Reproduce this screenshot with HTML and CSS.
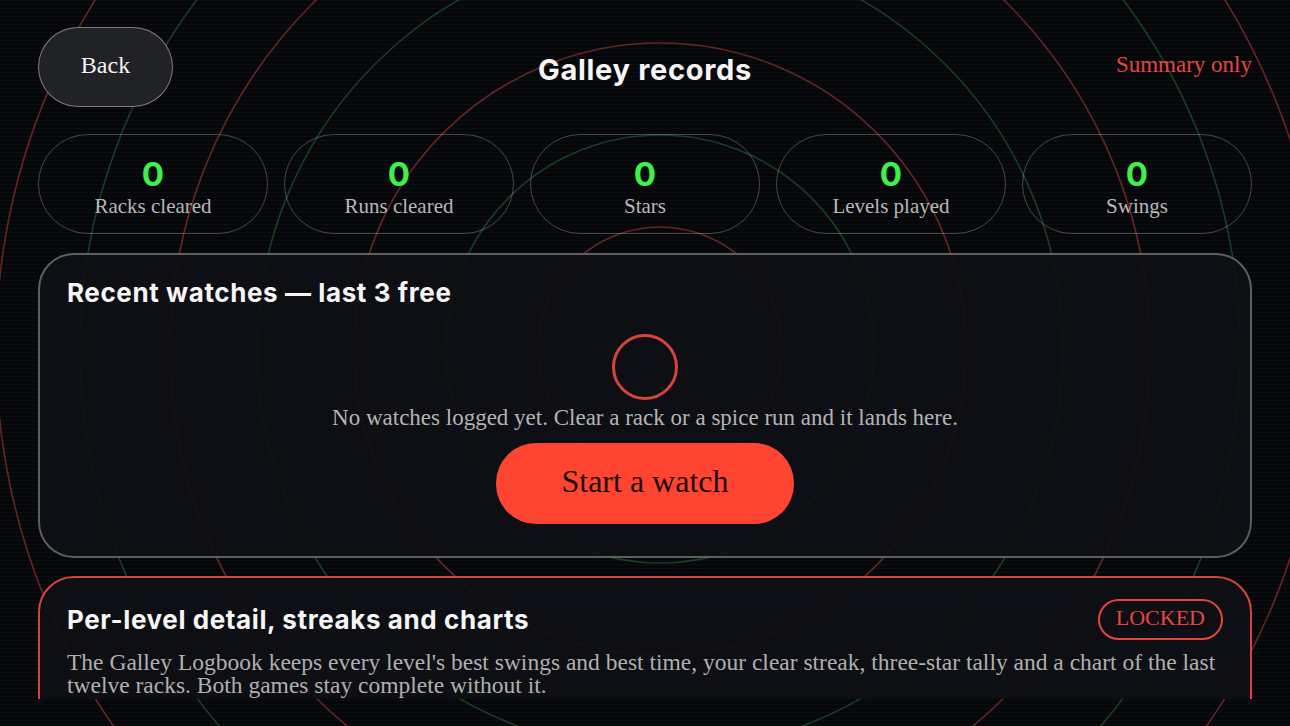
FILE: index.html
```html
<!DOCTYPE html>
<html lang="en">
<head>
<meta charset="utf-8">
<title>Galley records</title>
<link rel="stylesheet" href="styles.css">
</head>
<body>
<svg class="rings" width="1290" height="726" viewBox="0 0 1290 726" aria-hidden="true">
  <g fill="none" stroke-width="1.6">
    <circle class="r" cx="660" cy="349" r="122"/>
    <circle class="g" cx="660" cy="349" r="214"/>
    <circle class="r" cx="660" cy="349" r="306"/>
    <circle class="g" cx="660" cy="349" r="403"/>
    <circle class="r" cx="660" cy="349" r="490"/>
    <circle class="g" cx="660" cy="349" r="580"/>
    <circle class="r" cx="660" cy="349" r="664"/>
  </g>
</svg>
<div class="scan"></div>
<main class="screen">
  <header class="topbar">
    <button class="back">Back</button>
    <h1 class="title">Galley records</h1>
    <div class="summary">Summary only</div>
  </header>

  <section class="stats">
    <div class="stat"><div class="num">0</div><div class="label">Racks cleared</div></div>
    <div class="stat"><div class="num">0</div><div class="label">Runs cleared</div></div>
    <div class="stat"><div class="num">0</div><div class="label">Stars</div></div>
    <div class="stat"><div class="num">0</div><div class="label">Levels played</div></div>
    <div class="stat"><div class="num">0</div><div class="label">Swings</div></div>
  </section>

  <section class="card recent">
    <h2 class="card-title">Recent watches — last 3 free</h2>
    <div class="empty">
      <div class="empty-ring"></div>
      <p class="empty-text">No watches logged yet. Clear a rack or a spice run and it lands here.</p>
      <button class="cta">Start a watch</button>
    </div>
  </section>

  <section class="card locked">
    <div class="locked-head">
      <h2 class="card-title">Per-level detail, streaks and charts</h2>
      <span class="badge">LOCKED</span>
    </div>
    <p class="locked-text">The Galley Logbook keeps every level's best swings and best time, your clear streak, three-star tally and a chart of the last twelve racks. Both games stay complete without it.</p>
  </section>
</main>
</body>
</html>
```

FILE: styles.css
```css
* { box-sizing: border-box; }

html, body {
  margin: 0;
  padding: 0;
}

body {
  width: 1290px;
  height: 726px;
  overflow: hidden;
  background: #06070b;
  position: relative;
  font-family: "Liberation Serif", "Times New Roman", serif;
  color: #fff;
}

.rings {
  position: absolute;
  left: 0;
  top: 0;
  z-index: 0;
}
.rings .r { stroke: rgba(214, 70, 60, 0.46); }
.rings .g { stroke: rgba(60, 170, 80, 0.34); }

.scan {
  position: absolute;
  inset: 0;
  z-index: 1;
  pointer-events: none;
  background: repeating-linear-gradient(to bottom, rgba(255,255,255,0.025) 0 1px, transparent 1px 4px);
}

.screen {
  position: relative;
  z-index: 2;
  height: 699px;
  overflow: hidden;
  padding: 27px 38px 0;
}

.topbar {
  display: grid;
  grid-template-columns: 1fr auto 1fr;
  align-items: center;
  height: 80px;
}

.back {
  width: 135px;
  height: 80px;
  border-radius: 40px;
  background: #212226;
  border: 1.5px solid rgba(255,255,255,0.42);
  color: #f3f3f3;
  font-family: "Liberation Serif", serif;
  font-size: 24px;
  line-height: 24px;
  padding: 0 0 4px;
  cursor: pointer;
}

.title {
  margin: 0;
  font-family: Inter, "Liberation Sans", sans-serif;
  font-weight: 700;
  font-size: 29px;
  letter-spacing: 0.7px;
  color: #f6f6f6;
  position: relative;
  top: 2px;
}

.summary {
  justify-self: end;
  color: #e4483b;
  font-size: 23px;
  position: relative;
  top: -2px;
}

.stats {
  margin-top: 27px;
  display: grid;
  grid-template-columns: repeat(5, 1fr);
  gap: 16px;
}

.stat {
  height: 100px;
  border: 1px solid rgba(255,255,255,0.26);
  border-radius: 50px;
  display: flex;
  flex-direction: column;
  align-items: center;
  justify-content: center;
}

.num {
  font-family: Inter, "Liberation Sans", sans-serif;
  font-weight: 700;
  font-size: 33px;
  line-height: 36px;
  color: #3ef04a;
  margin-top: 6px;
}

.label {
  font-size: 21px;
  line-height: 26px;
  color: #b8b8b8;
  margin-top: 1px;
}

.card {
  background: rgba(15, 16, 21, 0.94);
  border-radius: 36px;
  padding-left: 27px;
  padding-right: 27px;
}

.recent {
  margin-top: 19px;
  height: 305px;
  border: 2px solid rgba(255,255,255,0.33);
  padding-top: 23px;
}

.card-title {
  margin: 0;
  font-family: Inter, "Liberation Sans", sans-serif;
  font-weight: 700;
  font-size: 26px;
  letter-spacing: 0.6px;
  line-height: 30px;
  color: #f6f6f6;
}

.empty {
  display: flex;
  flex-direction: column;
  align-items: center;
}

.empty-ring {
  margin-top: 26px;
  width: 66px;
  height: 66px;
  border-radius: 50%;
  border: 3px solid #d6443a;
}

.empty-text {
  margin: 5px 0 0;
  font-size: 23px;
  line-height: 26px;
  color: #b4b4b4;
}

.cta {
  margin-top: 12px;
  width: 298px;
  height: 81px;
  border-radius: 40px;
  border: none;
  background: #ff4431;
  color: #1c0b08;
  font-family: "Liberation Serif", serif;
  font-size: 32px;
  line-height: 32px;
  padding: 0 0 5px;
  cursor: pointer;
}

.locked {
  margin-top: 18px;
  height: 200px;
  border: 2px solid #d9443a;
  padding-top: 21px;
}

.locked-head {
  display: flex;
  align-items: center;
  justify-content: space-between;
  height: 41px;
}

.badge {
  height: 41px;
  padding: 0 16px;
  border: 2px solid #e2463a;
  border-radius: 21px;
  color: #e4483b;
  font-size: 22px;
  line-height: 34px;
}

.locked-text {
  margin: 11px 0 0;
  font-size: 23.5px;
  line-height: 23px;
  color: #b0b0b0;
}
```
